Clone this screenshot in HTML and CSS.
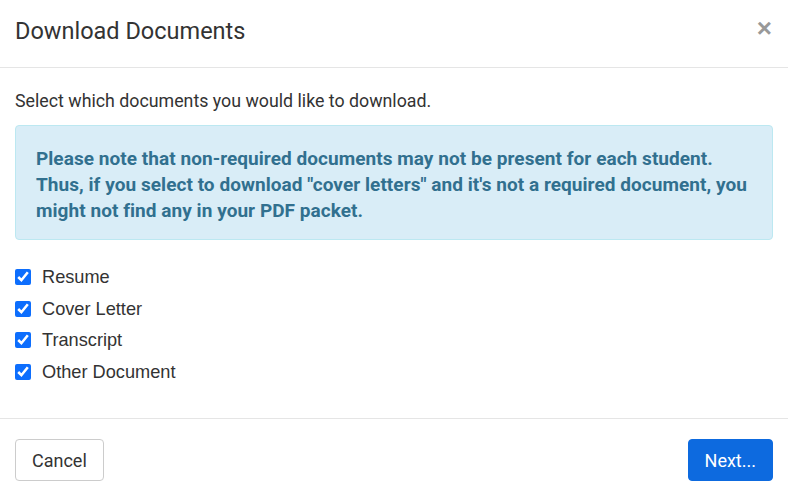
FILE: index.html
```html
<!DOCTYPE html>
<html lang="en">
<head>
    <meta charset="UTF-8">
    <title>Download Documents</title>
    <link rel="stylesheet" href="styles.css">
</head>
<body>
    <div class="modal">
        <div class="modal-header">
            <h4 class="modal-title">Download Documents</h4>
            <button class="close" type="button">&times;</button>
        </div>
        <div class="modal-body">
            <p class="intro">Select which documents you would like to download.</p>
            <div class="alert">
                Please note that non-required documents may not be present for each student.
                Thus, if you select to download "cover letters" and it's not a required document, you
                might not find any in your PDF packet.
            </div>
            <div class="doc-list">
                <label class="doc"><input type="checkbox" checked> Resume</label>
                <label class="doc"><input type="checkbox" checked> Cover Letter</label>
                <label class="doc"><input type="checkbox" checked> Transcript</label>
                <label class="doc"><input type="checkbox" checked> Other Document</label>
            </div>
        </div>
        <div class="modal-footer">
            <button class="btn btn-default" type="button">Cancel</button>
            <button class="btn btn-primary" type="button">Next...</button>
        </div>
    </div>
</body>
</html>
```

FILE: styles.css
```css
body {
    margin: 0;
    background-color: #fff;
    font-family: "Liberation Sans", Arial, sans-serif;
    color: #333;
}

.modal {
    width: 788px;
}

.modal-header {
    display: flex;
    align-items: center;
    justify-content: space-between;
    height: 68px;
    padding: 0 15px 6px;
    border-bottom: 1px solid #e5e5e5;
    box-sizing: border-box;
}

.modal-title {
    margin: 0;
    font-family: Roboto, sans-serif;
    font-weight: 400;
    font-size: 23.5px;
    color: #333;
}

.close {
    background: none;
    border: none;
    padding: 0;
    font-size: 26px;
    font-weight: bold;
    line-height: 1;
    color: #999;
    margin-top: -6px;
    margin-right: 1px;
    cursor: pointer;
}

.modal-body {
    padding: 22px 15px 35px;
}

.intro {
    margin: 0 0 14px;
    font-family: Roboto, sans-serif;
    font-size: 17.8px;
    line-height: 21px;
}

.alert {
    background-color: #d9edf7;
    border: 1px solid #bce8f1;
    border-radius: 4px;
    color: #31708f;
    font-family: Roboto, sans-serif;
    font-weight: bold;
    font-size: 19px;
    letter-spacing: 0.05px;
    line-height: 26px;
    padding: 20px 20px 15px;
    margin-bottom: 26px;
}

.doc-list {
    display: flex;
    flex-direction: column;
    gap: 9px;
}

.doc {
    display: flex;
    align-items: center;
    font-size: 18.2px;
    line-height: 22.5px;
    color: #333;
}

.doc input {
    width: 16px;
    height: 16px;
    margin: 0 11px 0 0;
    accent-color: #0d6efd;
}

.modal-footer {
    display: flex;
    justify-content: space-between;
    padding: 20px 15px 15px;
    border-top: 1px solid #e5e5e5;
}

.btn {
    height: 42px;
    padding: 0 16px;
    font-family: Roboto, sans-serif;
    font-size: 18px;
    border-radius: 4px;
    cursor: pointer;
}

.btn-default {
    background-color: #fff;
    border: 1px solid #ccc;
    color: #333;
}

.btn-primary {
    background-color: #0d6adf;
    border: 1px solid #0d6adf;
    color: #fff;
}
```
